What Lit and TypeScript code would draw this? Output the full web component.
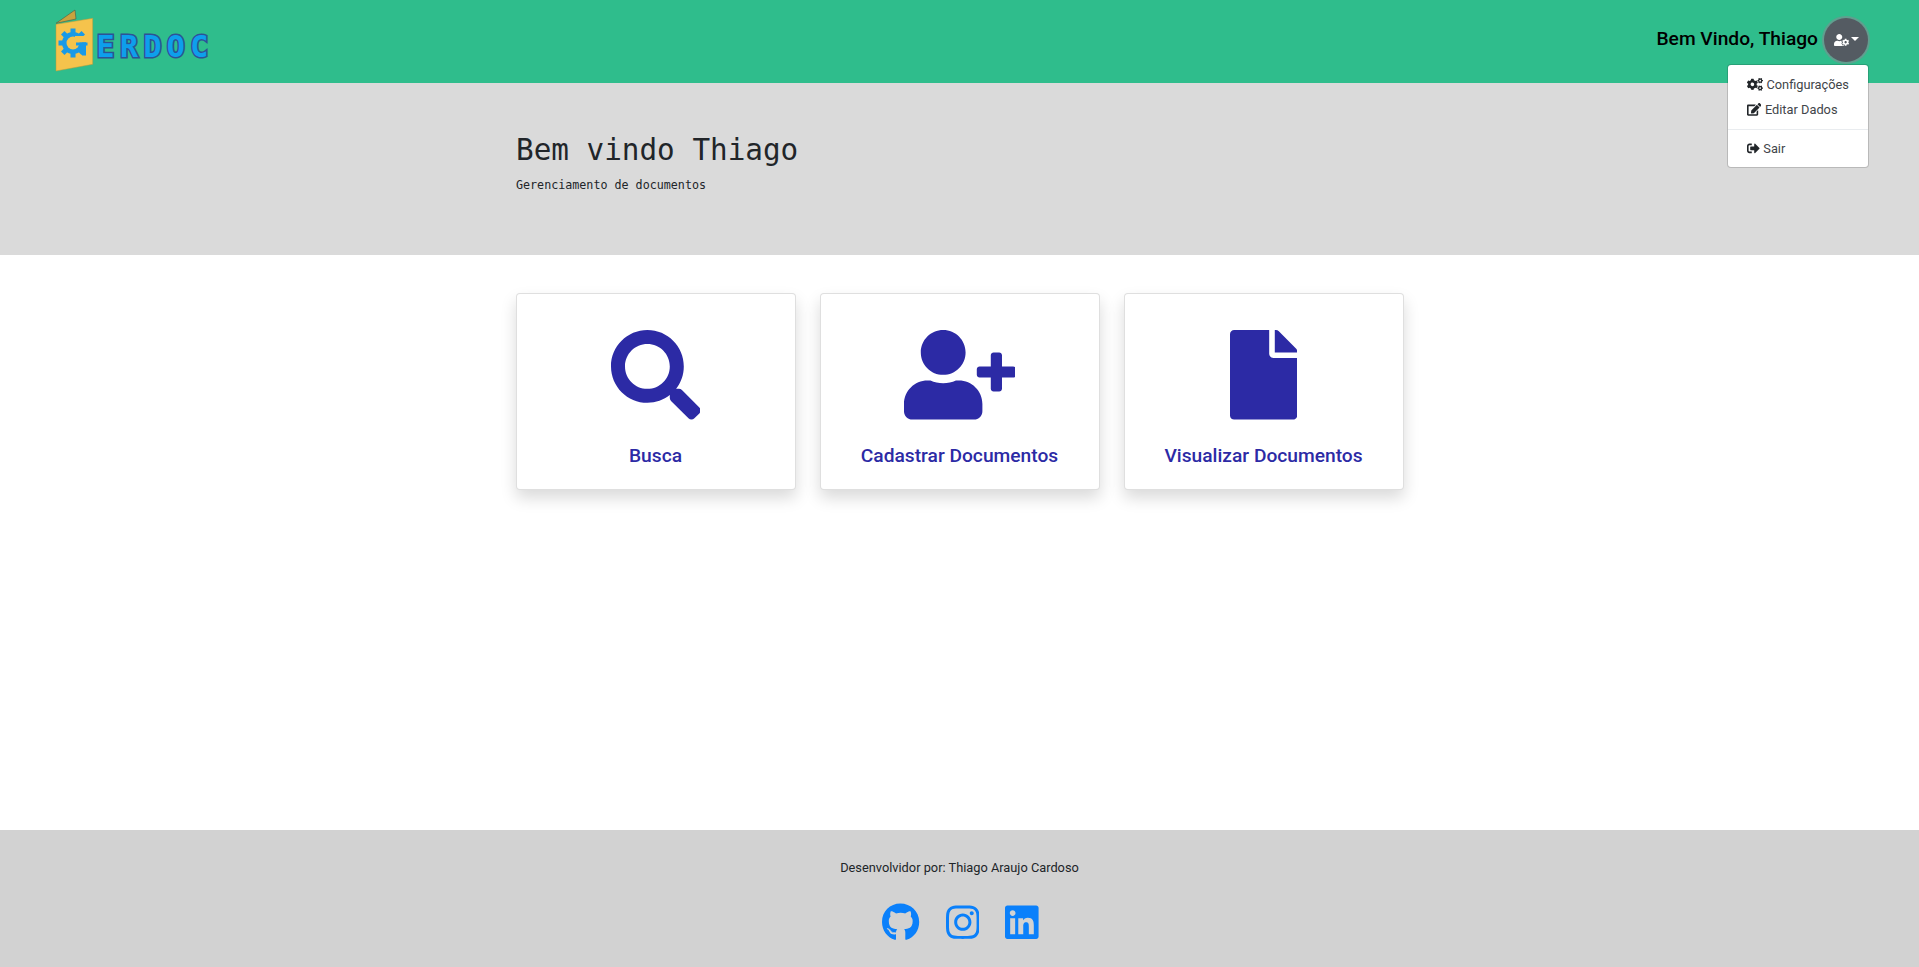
import { LitElement, html, css, svg } from "lit";
import { customElement } from "lit/decorators.js";

const P = {
  search: "M505 442.7L405.3 343c-4.5-4.5-10.6-7-17-7H372c27.6-35.3 44-79.7 44-128C416 93.1 322.9 0 208 0S0 93.1 0 208s93.1 208 208 208c48.3 0 92.7-16.4 128-44v16.3c0 6.4 2.5 12.5 7 17l99.7 99.7c9.4 9.4 24.6 9.4 33.9 0l28.3-28.3c9.4-9.4 9.4-24.6.1-34zM208 336c-70.7 0-128-57.2-128-128 0-70.7 57.2-128 128-128 70.7 0 128 57.2 128 128 0 70.7-57.2 128-128 128z",
  userPlus: "M624 208h-64v-64c0-8.8-7.2-16-16-16h-32c-8.8 0-16 7.2-16 16v64h-64c-8.8 0-16 7.2-16 16v32c0 8.8 7.2 16 16 16h64v64c0 8.8 7.2 16 16 16h32c8.8 0 16-7.2 16-16v-64h64c8.8 0 16-7.2 16-16v-32c0-8.8-7.2-16-16-16zm-400 48c70.7 0 128-57.3 128-128S294.7 0 224 0 96 57.3 96 128s57.3 128 128 128zm89.6 32h-16.7c-22.2 10.2-46.9 16-72.9 16s-50.6-5.8-72.9-16h-16.7C60.2 288 0 348.2 0 422.4V464c0 26.5 21.5 48 48 48h352c26.5 0 48-21.5 48-48v-41.6c0-74.2-60.2-134.4-134.4-134.4z",
  file: "M224 136V0H24C10.7 0 0 10.7 0 24v464c0 13.3 10.7 24 24 24h336c13.3 0 24-10.7 24-24V160H248c-13.2 0-24-10.8-24-24zm160-14.1v6.1H256V0h6.1c6.4 0 12.5 2.5 17 7l97.9 98c4.5 4.5 7 10.6 7 16.9z",
  cogs: "M512.1 191l-8.2 14.3c-3 5.3-9.4 7.5-15.1 5.4-11.8-4.4-22.6-10.7-32.1-18.6-4.6-3.8-5.8-10.5-2.8-15.7l8.2-14.3c-6.9-8-12.3-17.3-15.9-27.4h-16.5c-6 0-11.2-4.3-12.2-10.3-2-12-2.1-24.6 0-37.1 1-6 6.2-10.4 12.2-10.4h16.5c3.6-10.1 9-19.4 15.9-27.4l-8.2-14.3c-3-5.2-1.9-11.9 2.8-15.7 9.5-7.9 20.4-14.2 32.1-18.6 5.7-2.1 12.1.1 15.1 5.4l8.2 14.3c10.5-1.9 21.2-1.9 31.7 0L552 6.3c3-5.3 9.4-7.5 15.1-5.4 11.8 4.4 22.6 10.7 32.1 18.6 4.6 3.8 5.8 10.5 2.8 15.7l-8.2 14.3c6.9 8 12.3 17.3 15.9 27.4h16.5c6 0 11.2 4.3 12.2 10.3 2 12 2.1 24.6 0 37.1-1 6-6.2 10.4-12.2 10.4h-16.5c-3.6 10.1-9 19.4-15.9 27.4l8.2 14.3c3 5.2 1.9 11.9-2.8 15.7-9.5 7.9-20.4 14.2-32.1 18.6-5.7 2.1-12.1-.1-15.1-5.4l-8.2-14.3c-10.4 1.9-21.2 1.9-31.7 0zm-10.5-58.8c38.5 29.6 82.4-14.3 52.8-52.8-38.5-29.7-82.4 14.3-52.8 52.8zM386.3 286.1l33.7 16.8c10.1 5.8 14.5 18.1 10.5 29.1-8.9 24.2-26.4 46.4-42.6 65.8-7.4 8.9-20.2 11.1-30.3 5.3l-29.1-16.8c-16 13.7-34.6 24.6-54.9 31.7v33.6c0 11.6-8.3 21.6-19.7 23.6-24.6 4.2-50.4 4.4-75.9 0-11.5-2-20-11.9-20-23.6V418c-20.3-7.2-38.9-18-54.9-31.7L74 403c-10 5.8-22.9 3.6-30.3-5.3-16.2-19.4-33.3-41.6-42.2-65.7-4-10.9.4-23.2 10.5-29.1l33.3-16.8c-3.9-20.9-3.9-42.4 0-63.4L12 205.8c-10.1-5.8-14.6-18.1-10.5-29 8.9-24.2 26-46.4 42.2-65.8 7.4-8.9 20.2-11.1 30.3-5.3l29.1 16.8c16-13.7 34.6-24.6 54.9-31.7V57.1c0-11.5 8.2-21.5 19.6-23.5 24.6-4.2 50.5-4.4 76-.1 11.5 2 20 11.9 20 23.6v33.6c20.3 7.2 38.9 18 54.9 31.7l29.1-16.8c10-5.8 22.9-3.6 30.3 5.3 16.2 19.4 33.2 41.6 42.1 65.8 4 10.9.1 23.2-10 29.1l-33.7 16.8c3.9 21 3.9 42.5 0 63.5zm-117.6 21.1c59.2-77-28.7-164.9-105.7-105.7-59.2 77 28.7 164.9 105.7 105.7zm243.4 182.7l-8.2 14.3c-3 5.3-9.4 7.5-15.1 5.4-11.8-4.4-22.6-10.7-32.1-18.6-4.6-3.8-5.8-10.5-2.8-15.7l8.2-14.3c-6.9-8-12.3-17.3-15.9-27.4h-16.5c-6 0-11.2-4.3-12.2-10.3-2-12-2.1-24.6 0-37.1 1-6 6.2-10.4 12.2-10.4h16.5c3.6-10.1 9-19.4 15.9-27.4l-8.2-14.3c-3-5.2-1.9-11.9 2.8-15.7 9.5-7.9 20.4-14.2 32.1-18.6 5.7-2.1 12.1.1 15.1 5.4l8.2 14.3c10.5-1.9 21.2-1.9 31.7 0l8.2-14.3c3-5.3 9.4-7.5 15.1-5.4 11.8 4.4 22.6 10.7 32.1 18.6 4.6 3.8 5.8 10.5 2.8 15.7l-8.2 14.3c6.9 8 12.3 17.3 15.9 27.4h16.5c6 0 11.2 4.3 12.2 10.3 2 12 2.1 24.6 0 37.1-1 6-6.2 10.4-12.2 10.4h-16.5c-3.6 10.1-9 19.4-15.9 27.4l8.2 14.3c3 5.2 1.9 11.9-2.8 15.7-9.5 7.9-20.4 14.2-32.1 18.6-5.7 2.1-12.1-.1-15.1-5.4l-8.2-14.3c-10.4 1.9-21.2 1.9-31.7 0zM501.6 431c38.5 29.6 82.4-14.3 52.8-52.8-38.5-29.6-82.4 14.3-52.8 52.8z",
  edit: "M402.6 83.2l90.2 90.2c3.8 3.8 3.8 10 0 13.8L274.4 405.6l-92.8 10.3c-12.4 1.4-22.9-9.1-21.5-21.5l10.3-92.8L388.8 83.2c3.8-3.8 10-3.8 13.8 0zm162-22.9l-48.8-48.8c-15.2-15.2-39.9-15.2-55.2 0l-35.4 35.4c-3.8 3.8-3.8 10 0 13.8l90.2 90.2c3.8 3.8 10 3.8 13.8 0l35.4-35.4c15.2-15.3 15.2-40 0-55.2zM384 346.2V448H64V128h229.8c3.2 0 6.2-1.3 8.5-3.5l40-40c7.6-7.6 2.2-20.5-8.5-20.5H48C21.5 64 0 85.5 0 112v352c0 26.5 21.5 48 48 48h352c26.5 0 48-21.5 48-48V306.2c0-10.7-12.9-16-20.5-8.5l-40 40c-2.2 2.3-3.5 5.3-3.5 8.5z",
  signOut: "M497 273L329 441c-15 15-41 4.5-41-17v-96H152c-13.3 0-24-10.7-24-24v-96c0-13.3 10.7-24 24-24h136V88c0-21.4 25.9-32 41-17l168 168c9.3 9.4 9.3 24.6 0 34zM192 436v-40c0-6.6-5.4-12-12-12H96c-17.7 0-32-14.3-32-32V160c0-17.7 14.3-32 32-32h84c6.6 0 12-5.4 12-12V76c0-6.6-5.4-12-12-12H96c-53 0-96 43-96 96v192c0 53 43 96 96 96h84c6.6 0 12-5.4 12-12z",
  userCog: "M610.5 373.3c2.6-14.1 2.6-28.5 0-42.6l25.8-14.9c3-1.7 4.3-5.2 3.3-8.5-6.7-21.6-18.2-41.2-33.2-57.4-2.3-2.5-6-3.1-9-1.4l-25.8 14.9c-10.9-9.3-23.4-16.5-36.9-21.3v-29.8c0-3.4-2.4-6.4-5.7-7.1-22.3-5-45-4.8-66.2 0-3.3.7-5.7 3.7-5.7 7.1v29.8c-13.5 4.8-26 12-36.9 21.3l-25.8-14.9c-2.9-1.7-6.7-1.1-9 1.4-15 16.2-26.5 35.8-33.2 57.4-1 3.3.4 6.8 3.3 8.5l25.8 14.9c-2.6 14.1-2.6 28.5 0 42.6l-25.8 14.9c-3 1.7-4.3 5.2-3.3 8.5 6.7 21.6 18.2 41.1 33.2 57.4 2.3 2.5 6 3.1 9 1.4l25.8-14.9c10.9 9.3 23.4 16.5 36.9 21.3v29.8c0 3.4 2.4 6.4 5.7 7.1 22.3 5 45 4.8 66.2 0 3.3-.7 5.7-3.7 5.7-7.1v-29.8c13.5-4.8 26-12 36.9-21.3l25.8 14.9c2.9 1.7 6.7 1.1 9-1.4 15-16.2 26.5-35.8 33.2-57.4 1-3.3-.4-6.8-3.3-8.5l-25.8-14.9zM496 400.5c-26.8 0-48.5-21.8-48.5-48.5s21.8-48.5 48.5-48.5 48.5 21.8 48.5 48.5-21.7 48.5-48.5 48.5zM224 256c70.7 0 128-57.3 128-128S294.7 0 224 0 96 57.3 96 128s57.3 128 128 128zm201.2 226.5c-2.3-1.2-4.6-2.6-6.8-3.9l-7.9 4.6c-6 3.4-12.8 5.3-19.6 5.3-10.9 0-21.4-4.6-28.9-12.6-18.3-19.8-32.3-43.9-40.2-69.6-5.5-17.7 1.9-36.4 17.9-45.7l7.9-4.6c-.1-2.6-.1-5.2 0-7.8l-7.9-4.6c-16-9.2-23.4-28-17.9-45.7.9-2.9 2.2-5.8 3.2-8.7-3.8-.3-7.5-1.2-11.4-1.2h-16.7c-22.2 10.2-46.9 16-72.9 16s-50.6-5.8-72.9-16h-16.7C60.2 288 0 348.2 0 422.4V464c0 26.5 21.5 48 48 48h352c10.1 0 19.5-3.2 27.2-8.5-1.2-3.8-2-7.7-2-11.8v-9.2z",
  github: "M165.9 397.4c0 2-2.3 3.6-5.2 3.6-3.3 0-5.6-1.6-5.6-3.6 0-2 2.3-3.6 5.2-3.6 3-.3 5.6 1.3 5.6 3.6zm-31.1-4.5c-.7 2 1.3 4.3 4.3 4.9 2.6 1 5.6 0 6.2-2s-1.3-4.3-4.3-5.2c-2.6-.7-5.5.3-6.2 2.3zm44.2-1.7c-2.9.7-4.9 2.6-4.6 4.9.3 2 2.9 3.3 5.9 2.6 2.9-.7 4.9-2.6 4.6-4.6-.3-1.9-3-3.2-5.9-2.9zM244.8 8C106.1 8 0 113.3 0 252c0 110.9 69.8 205.8 169.5 239.2 12.8 2.3 17.3-5.6 17.3-12.1 0-6.2-.3-40.4-.3-61.4 0 0-70 15-84.7-29.8 0 0-11.4-29.1-27.8-36.6 0 0-22.9-15.7 1.6-15.4 0 0 24.9 2 38.6 25.8 21.9 38.6 58.6 27.5 72.9 20.9 2.3-16 8.8-27.1 16-33.7-55.9-6.2-112.3-14.3-112.3-110.5 0-27.5 7.6-41.3 23.6-58.9-2.6-6.5-11.1-33.3 2.6-67.9 20.9-6.5 69 27 69 27 20-5.6 41.5-8.5 62.8-8.5s42.8 2.9 62.8 8.5c0 0 48.1-33.6 69-27 13.7 34.7 5.2 61.4 2.6 67.9 16 17.7 25.8 31.5 25.8 58.9 0 96.5-58.9 104.2-114.8 110.5 9.2 7.9 17 22.9 17 46.4 0 33.7-.3 75.4-.3 83.6 0 6.5 4.6 14.4 17.3 12.1C428.2 457.8 496 362.9 496 252 496 113.3 383.5 8 244.8 8zM97.2 352.9c-1.3 1-1 3.3.7 5.2 1.6 1.6 3.9 2.3 5.2 1 1.3-1 1-3.3-.7-5.2-1.6-1.6-3.9-2.3-5.2-1zm-10.8-8.1c-.7 1.3.3 2.9 2.3 3.9 1.6 1 3.6.7 4.3-.7.7-1.3-.3-2.9-2.3-3.9-2-.6-3.6-.3-4.3.7zm32.4 35.6c-1.6 1.3-1 4.3 1.3 6.2 2.3 2.3 5.2 2.6 6.5 1 1.3-1.3.7-4.3-1.3-6.2-2.2-2.3-5.2-2.6-6.5-1zm-11.4-14.7c-1.6 1-1.6 3.6 0 5.9 1.6 2.3 4.3 3.3 5.6 2.3 1.6-1.3 1.6-3.9 0-6.2-1.4-2.3-4-3.3-5.6-2z",
  instagram: "M224.1 141c-63.6 0-114.9 51.3-114.9 114.9s51.3 114.9 114.9 114.9S339 319.5 339 255.9 287.7 141 224.1 141zm0 189.6c-41.1 0-74.7-33.5-74.7-74.7s33.5-74.7 74.7-74.7 74.7 33.5 74.7 74.7-33.6 74.7-74.7 74.7zm146.4-194.3c0 14.9-12 26.8-26.8 26.8-14.9 0-26.8-12-26.8-26.8s12-26.8 26.8-26.8 26.8 12 26.8 26.8zm76.1 27.2c-1.7-35.9-9.9-67.7-36.2-93.9-26.2-26.2-58-34.4-93.9-36.2-37-2.1-147.9-2.1-184.9 0-35.8 1.7-67.6 9.9-93.9 36.1s-34.4 58-36.2 93.9c-2.1 37-2.1 147.9 0 184.9 1.7 35.9 9.9 67.7 36.2 93.9s58 34.4 93.9 36.2c37 2.1 147.9 2.1 184.9 0 35.9-1.7 67.7-9.9 93.9-36.2 26.2-26.2 34.4-58 36.2-93.9 2.1-37 2.1-147.8 0-184.8zM398.8 388c-7.8 19.6-22.9 34.7-42.6 42.6-29.5 11.7-99.5 9-132.1 9s-102.7 2.6-132.1-9c-19.6-7.8-34.7-22.9-42.6-42.6-11.7-29.5-9-99.5-9-132.1s-2.6-102.7 9-132.1c7.8-19.6 22.9-34.7 42.6-42.6 29.5-11.7 99.5-9 132.1-9s102.7-2.6 132.1 9c19.6 7.8 34.7 22.9 42.6 42.6 11.7 29.5 9 99.5 9 132.1s2.7 102.7-9 132.1z",
  linkedin: "M416 32H31.9C14.3 32 0 46.5 0 64.3v383.4C0 465.5 14.3 480 31.9 480H416c17.6 0 32-14.5 32-32.3V64.3c0-17.8-14.4-32.3-32-32.3zM135.4 416H69V202.2h66.5V416zm-33.2-243c-21.3 0-38.5-17.3-38.5-38.5S80.9 96 102.2 96c21.2 0 38.5 17.3 38.5 38.5 0 21.3-17.2 38.5-38.5 38.5zm282.1 243h-66.4V312c0-24.8-.5-56.7-34.5-56.7-34.6 0-39.9 27-39.9 54.9V416h-66.4V202.2h63.7v29.2h.9c8.9-16.8 30.6-34.5 62.9-34.5 67.2 0 79.7 44.3 79.7 101.9V416z",
};

const icon = (d: string, w: number, cls = "") => html`<svg class="ic ${cls}" viewBox="0 0 ${w} 512" fill="currentColor" aria-hidden="true"><path d=${d}></path></svg>`;

const gearTeeth = [0, 45, 90, 135];

@customElement("app-root")
export class AppRoot extends LitElement {
  static styles = css`
    :host { display: flex; flex-direction: column; min-height: 100vh; background: #fff; font-family: Roboto, "Liberation Sans", sans-serif; color: #212529; position: relative; }
    * { box-sizing: border-box; }
    .ic { height: 1em; display: block; flex: none; }

    .nav { height: 83px; background: #2fbd8c; display: flex; align-items: center; justify-content: space-between; padding: 0 49px 0 51px; flex: none; }
    .logo { width: 160px; height: 66px; display: block; overflow: visible; }
    .logo text { font-family: "DejaVu Sans Mono", monospace; font-weight: 700; font-size: 30px; fill: #0d9fec; stroke: #2d5296; stroke-width: 3px; paint-order: stroke; stroke-linejoin: miter; }
    .user { display: flex; align-items: center; gap: 4px; margin-top: -3px; }
    .greet { font-size: 19.2px; font-weight: 500; color: #000; padding-bottom: 4px; }
    .btn { width: 44px; height: 44px; margin: 2px; border-radius: 50%; background: #545b62; box-shadow: 0 0 0 2px rgba(130,138,145,.6); color: #fff; display: flex; align-items: center; justify-content: center; gap: 2px; font-size: 12px; }
    .caret { width: 0; height: 0; border-left: 4px solid transparent; border-right: 4px solid transparent; border-top: 4px solid #fff; margin-top: -2px; }

    .menu { position: absolute; top: 64px; right: 50px; width: 142px; height: 104px; background: #fff; border: 1px solid rgba(0,0,0,.15); border-radius: 4px; padding: 7px 0; font-size: 12.8px; color: #414549; z-index: 5; background-clip: padding-box; }
    .item { display: flex; align-items: center; gap: 3.5px; height: 25px; padding: 0 19px; line-height: 25px; }
    .item .ic { color: #212529; font-size: 12.8px; }
    .rule { height: 0; border-top: 1px solid #e9ecef; margin: 7px 0 6px; }

    .hero { height: 172px; background: #dadada; flex: none; }
    .hero-in { width: 887px; margin: 0 auto; padding-top: 48px; font-family: "DejaVu Sans Mono", monospace; }
    h1 { margin: 0; font-size: 29.3px; font-weight: 400; line-height: 38px; color: #212529; }
    .sub { margin-top: 9px; font-size: 11.7px; line-height: 15px; color: #212529; }

    .main { flex: 1; }
    .cards { width: 888px; margin: 38px auto 0; display: grid; grid-template-columns: repeat(3, 280px); gap: 24px; }
    .card { height: 197px; background: #fff; border: 1px solid rgba(0,0,0,.125); border-radius: 4px; box-shadow: 0 8px 16px rgba(0,0,0,.15); display: flex; flex-direction: column; align-items: center; padding-top: 36px; color: #2c2aa5; }
    .card .ic { font-size: 89.6px; }
    .lab { margin-top: 23px; font-size: 19.2px; font-weight: 500; line-height: 26px; text-align: center; }

    .foot { height: 137px; background: #d2d2d2; flex: none; display: flex; flex-direction: column; align-items: center; padding-top: 30px; }
    .cred { font-size: 12.8px; line-height: 16px; color: #212529; }
    .soc { margin-top: 27px; padding-left: 2px; display: flex; gap: 26px; color: #0a80fb; font-size: 38.4px; }
  `;

  render() {
    return html`
      <header class="nav">
        <svg class="logo" viewBox="0 0 160 66" aria-label="Gerdoc logo">
          <polygon points="5,14.3 24,1 25,10" fill="#c9a33e" stroke="#4a5a44" stroke-width=".6"></polygon>
          <polygon points="5,15.3 41.7,9.3 41.7,55.3 5,62" fill="#f5c34c" stroke="#b89a3a" stroke-width=".5"></polygon>
          <g fill="#1a9ae6" stroke="none">
            ${gearTeeth.map(a => svg`<rect x="19.5" y="19.5" width="5" height="29" transform="rotate(${a} 22 34)"></rect>`)}
            <circle cx="22" cy="34" r="11"></circle>
            <circle cx="22" cy="34" r="6.5" fill="#f5c34c"></circle>
            <rect x="24" y="27" width="16" height="6.5" fill="#f5c34c"></rect>
            <rect x="25" y="33.5" width="10" height="3"></rect>
            <rect x="31" y="33.5" width="4" height="13"></rect>
          </g>
          <text x="45.5 69 92.4 115.8 139.2" y="47.5">ERDOC</text>
        </svg>
        <div class="user">
          <span class="greet">Bem Vindo, Thiago</span>
          <div class="btn">${icon(P.userCog, 640)}<span class="caret"></span></div>
        </div>
      </header>

      <div class="menu">
        <div class="item">${icon(P.cogs, 640)}<span>Configurações</span></div>
        <div class="item">${icon(P.edit, 576)}<span>Editar Dados</span></div>
        <div class="rule"></div>
        <div class="item">${icon(P.signOut, 512)}<span>Sair</span></div>
      </div>

      <section class="hero">
        <div class="hero-in">
          <h1>Bem vindo Thiago</h1>
          <div class="sub">Gerenciamento de documentos</div>
        </div>
      </section>

      <main class="main">
        <div class="cards">
          <div class="card">${icon(P.search, 512)}<div class="lab">Busca</div></div>
          <div class="card">${icon(P.userPlus, 640)}<div class="lab">Cadastrar Documentos</div></div>
          <div class="card">${icon(P.file, 384)}<div class="lab">Visualizar Documentos</div></div>
        </div>
      </main>

      <footer class="foot">
        <div class="cred">Desenvolvidor por: Thiago Araujo Cardoso</div>
        <div class="soc">${icon(P.github, 496)}${icon(P.instagram, 448)}${icon(P.linkedin, 448)}</div>
      </footer>
    `;
  }
}
